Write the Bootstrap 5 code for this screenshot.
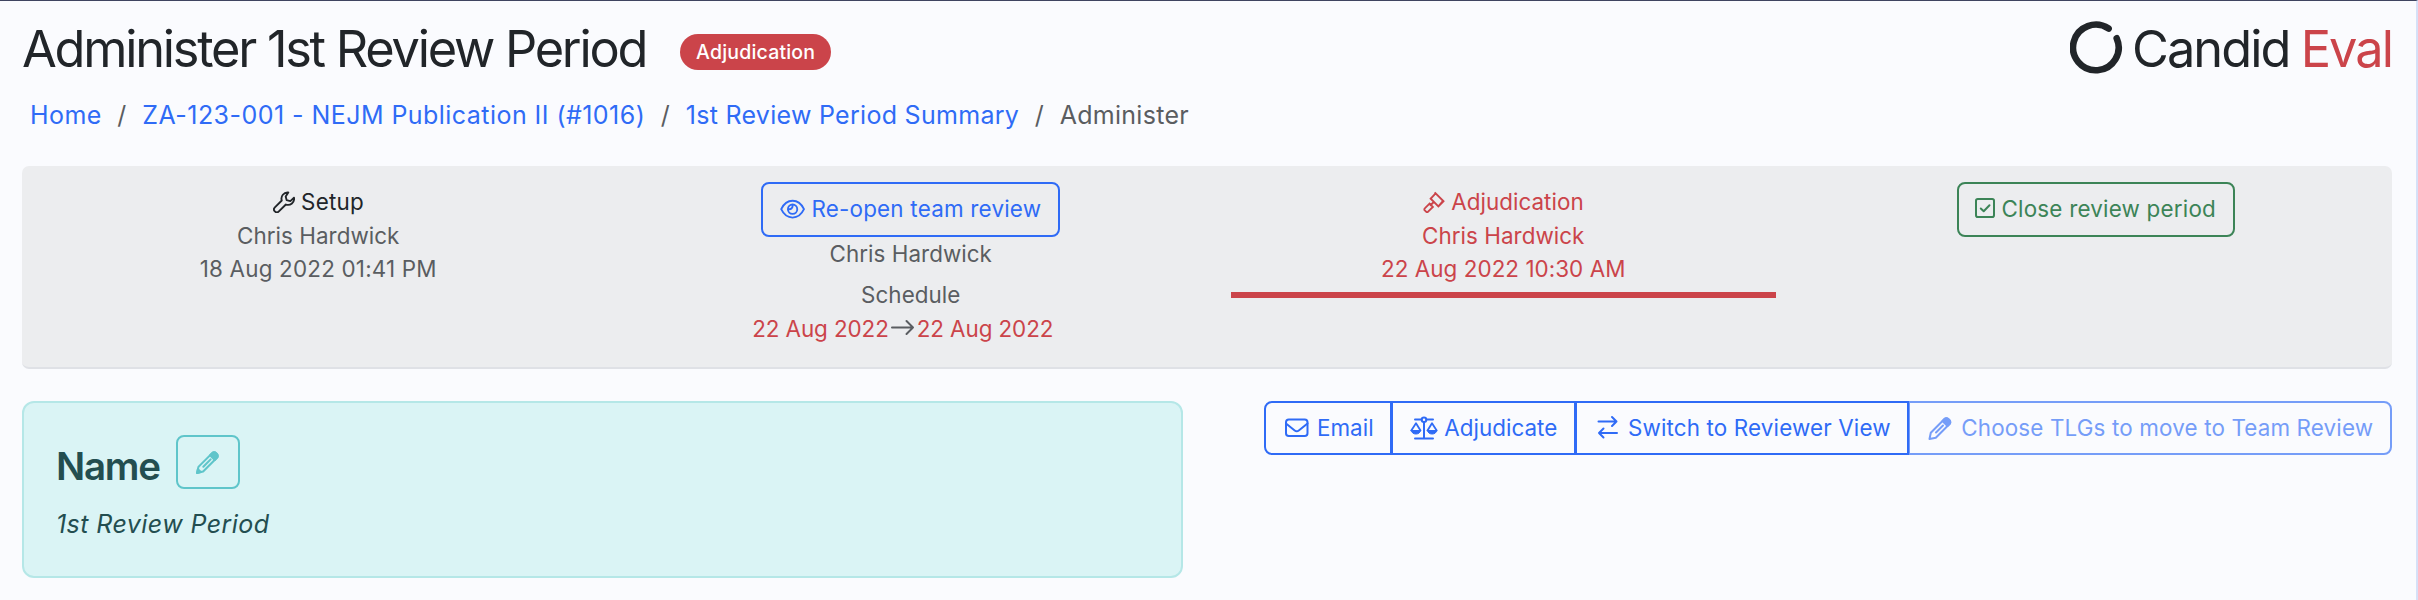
<!DOCTYPE html>
<html lang="en">
<head>
<meta charset="utf-8">
<title>Administer 1st Review Period</title>
<link href="https://cdn.jsdelivr.net/npm/bootstrap@5.3.0/dist/css/bootstrap.min.css" rel="stylesheet">
<style>
html{font-size:22.4px}
body{font-family:Inter,"Liberation Sans",sans-serif;background:#fafbfe;color:#212529;height:600px;overflow:hidden;border-top:1px solid #3f4460;border-right:2px solid #d6e0f7;line-height:33.5px;padding:0 24px 0 22px;letter-spacing:.05px;white-space:nowrap}
svg{fill:none;stroke:currentColor;stroke-width:2;stroke-linecap:round;stroke-linejoin:round;flex:none;display:block}
svg .solid{fill:currentColor}
header{height:78px}
.display-title{font-size:50.5px;font-weight:400;line-height:60px;margin:18px 0 0;letter-spacing:-2.25px}
.brand-logo{margin:20px 8px 0 0;stroke-width:6.6}
.brand-name{letter-spacing:-1.95px;word-spacing:-1px}
.red{color:#cb444a}
.soft{color:#5a5d61}
.state-pill{background:#cb444a;color:#fff;font-size:19.5px;font-weight:500;height:36px;line-height:36px;border-radius:18px;padding:0 16px;margin:33px 0 0 34px;letter-spacing:.18px}
.crumbs{font-size:25px;line-height:38px;padding-left:8px;margin-top:17px;letter-spacing:.45px}
.crumbs a{color:#2f6bf6;text-decoration:none}
.crumbs i{font-style:normal;color:#5a5d61;margin:0 15.5px}
.crumbs .tight{letter-spacing:.29px}
.stages{background:#ecedef;border-bottom:2px solid #dfe1e6;border-radius:7px;height:203px;margin:32px 0;padding-top:16px}
.stage{padding:0 24px;flex:0 0 25%;text-align:center}
.stage-text{padding-top:3px}
.ln{display:flex;justify-content:center;align-items:center;height:33.5px}
.ln-date{letter-spacing:.2px}
.ln-range{padding-right:16px;letter-spacing:-.08px}
.ic{margin-right:6px}
.btn{--bs-btn-padding-x:16.8px;display:inline-flex;align-items:center;height:55px;border-width:2px;border-radius:8px;line-height:33.5px}
.stage .btn{letter-spacing:.22px;padding-bottom:10px}
.btn-outline-primary{--bs-btn-color:#2f6bf6;--bs-btn-border-color:#2f6bf6;--bs-btn-disabled-color:#2f6bf6;--bs-btn-disabled-border-color:#2f6bf6}
.btn-outline-success{--bs-btn-color:#3c8457;--bs-btn-border-color:#3c8457}
.btn-edit{--bs-btn-color:#5fc5ca;--bs-btn-border-color:#5fc5ca;width:64px;height:54px;margin-left:16px;justify-content:center}
.current-stage{border-bottom:6px solid #cb444a;padding-bottom:6.5px}
.name-card{width:1161px;height:177px;background:#daf4f5;border:2px solid #b5e7e7;border-radius:12px;padding:32px;color:#234e50}
.name-card h2{font-size:38.5px;font-weight:600;line-height:54px;margin:4px 0 -4px;letter-spacing:-1.25px}
.period-name{font-size:25px;line-height:37.5px;margin-top:17px;letter-spacing:.43px}
.btn-group .btn{height:54px;flex:none;letter-spacing:.04px}
.btn-group .btn-wide{letter-spacing:.15px}
.btn-group>.btn:not(:first-child){margin-left:-2px}
.btn-group>.btn:not(.disabled){z-index:1}
</style>
</head>
<body>
<header class="d-flex justify-content-between">
<div class="d-flex"><h1 class="display-title">Administer 1st Review Period</h1><span class="state-pill">Adjudication</span></div>
<div class="d-flex">
<svg class="brand-logo" width="54" height="54" viewBox="0 0 54 54"><path d="M46.7 17.3A22.8 22.8 0 1 1 38.6 7.6"/></svg>
<div class="display-title brand-name">Candid <span class="red">Eval</span></div></div>
</header>
<nav class="crumbs"><a href="#">Home</a><i>/</i><a href="#">ZA-123-001 - NEJM Publication II (#1016)</a><i>/</i><a href="#" class="tight">1st Review Period Summary</a><i>/</i><span class="soft tight">Administer</span></nav>

<section class="stages d-flex soft">
<div class="stage stage-text">
<div class="ln ln-date text-dark"><svg class="ic" width="22.4" height="22.4" viewBox="0 0 24 24"><path d="M16.4 1.6a6.6 6.6 0 0 0-7 8.6L2 17.6a3 3 0 0 0 4.3 4.3l7.5-7.4a6.6 6.6 0 0 0 8.7-7.4l-3.9 3.7-4-1-1-4z"/></svg>Setup</div>
<div class="ln">Chris Hardwick</div>
<div class="ln ln-date">18 Aug 2022 01:41 PM</div>
</div>
<div class="stage">
<button class="btn btn-outline-primary"><svg class="ic" width="25.2" height="22.4" viewBox="0 0 27 24"><path d="M1.3 12C4 6.3 8.400 3 13.500 3s9.500 3.300 12.200 9c-2.700 5.700-7.100 9-12.200 9S4 17.700 1.300 12z"/><circle cx="13.500" cy="12" r="5"/><path d="M9.500 12a3.500 3.500 0 0 0 4-4"/></svg>Re-open team review</button>
<div class="ln">Chris Hardwick</div>
<div class="ln" style="margin-top:7.500px">Schedule</div>
<div class="ln ln-range red">22 Aug 2022<svg class="soft" width="26" height="20" viewBox="0 0 26 20" style="margin:2px 1px 0"><path d="M2 8.500h21M16.500 2l6.500 6.500-6.500 6.500"/></svg>22 Aug 2022</div>
</div>
<div class="stage stage-text red"><div class="current-stage">
<div class="ln"><svg class="ic" width="22.4" height="22.4" viewBox="0 0 24 24" style="stroke-linecap:butt;stroke-linejoin:miter"><path d="M12.500 1.500l10 10M21.500 10.500l-5 6M7.500 7.500l9.500 9.500M13.500 2.500L8.300 8.300M13 2l9 9-5.500 5.500-8.500-8.500M11.500 11.800L7.500 15.800M7 13.500L1.900 18.600a1.500 1.500 0 0 0 0 2.200l1.400 1.400a1.500 1.500 0 0 0 2.200 0l5.100-5.100z"/></svg>Adjudication</div>
<div class="ln">Chris Hardwick</div>
<div class="ln">22 Aug 2022 10:30 AM</div></div>
</div>
<div class="stage">
<button class="btn btn-outline-success"><svg class="ic" width="20" height="20" viewBox="0 0 20 20" style="margin-top:-1px"><rect x="1" y="1" width="18" height="18" rx="1.800"/><path d="M5.800 10.500l2.900 2.700L14.500 7.300"/></svg>Close review period</button>
</div>
</section>

<section class="d-flex justify-content-between align-items-start">
<div class="name-card">
<div class="d-flex"><h2>Name</h2><button class="btn btn-edit"><svg width="25" height="25" viewBox="0 0 24 24"><path d="M2 22l1.300-5.800L16.500 3a2.600 2.600 0 0 1 3.700 0l.8.8a2.600 2.600 0 0 1 0 3.700L7.800 20.700zM8 16l7-7"/><path class="solid" d="M14.500 5l2-2a2.600 2.600 0 0 1 3.700 0l.8.8a2.600 2.600 0 0 1 0 3.700l-2 2zM2 22l.8-3.500 2.700 2.700z"/></svg></button></div>
<div class="period-name fst-italic">1st Review Period</div>
</div>
<div class="btn-group">
<button class="btn btn-outline-primary"><svg class="ic" width="28" height="24" viewBox="0 0 28 24"><rect x="3" y="3.500" width="21.500" height="16.500" rx="2.800"/><path d="M3 7.500l8.700 7a3.300 3.300 0 0 0 4.100 0l8.700-7"/></svg>Email</button>
<button class="btn btn-outline-primary"><svg class="ic" width="28" height="24" viewBox="0 0 28 24" style="margin-top:-1px"><circle cx="14" cy="3.700" r="2.300"/><path d="M14 6v16.500M5 3.500h6.500M16.500 3.500H23M5 22.500h18"/><path d="M1.300 14.500L6 7.200l4.500 7.300M17.500 14.500L22 7.200l4.700 7.300" style="stroke-width:1.800"/><path class="solid" d="M1.300 14.500h9.200c-.5 2.400-2.200 3.500-4.600 3.500s-4.100-1.100-4.600-3.500zM17.500 14.500h9.200c-.5 2.400-2.200 3.500-4.600 3.500s-4.100-1.100-4.600-3.500z" style="stroke-width:1"/></svg>Adjudicate</button>
<button class="btn btn-outline-primary btn-wide"><svg class="ic" width="28" height="24" viewBox="0 0 28 24" style="margin-top:-2px"><path d="M4.500 6.500h18M18 2l4.500 4.500L18 11M23 18H5M9.500 13.500L5 18l4.500 4.500"/></svg>Switch to Reviewer View</button>
<button class="btn btn-outline-primary btn-wide disabled"><svg class="ic" width="28" height="25" viewBox="-1 0 28 24"><path d="M1.500 22.500l1.300-6.300L16.500 2.500a2.600 2.600 0 0 1 3.700 0l1.300 1.300a2.600 2.600 0 0 1 0 3.700L7.800 21.200zM8 16l7-7"/><path class="solid" d="M14.500 4.500l2-2a2.600 2.600 0 0 1 3.700 0l1.300 1.300a2.600 2.600 0 0 1 0 3.700l-2 2z"/></svg>Choose TLGs to move to Team Review</button>
</div>
</section>
<script src="https://cdn.jsdelivr.net/npm/bootstrap@5.3.0/dist/js/bootstrap.bundle.min.js"></script>
</body>
</html>
